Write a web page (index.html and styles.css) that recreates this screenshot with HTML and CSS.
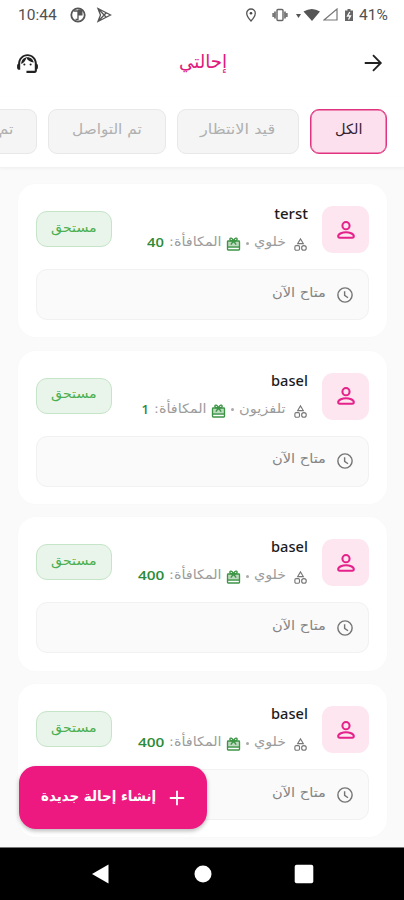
FILE: index.html
```
<!DOCTYPE html>
<html lang="ar" dir="rtl">
<head>
<meta charset="utf-8">
<title>إحالتي</title>
<link rel="stylesheet" href="styles.css">
</head>
<body>
<svg class="defs" width="0" height="0">
  <symbol id="person" viewBox="0 0 24 24"><g fill="none" stroke="currentColor" stroke-width="1.9"><circle cx="12" cy="8" r="3.3"/><path d="M12 14c-3 0-7.2 1.3-7.2 3.6 0 1 .5 1.5 1.4 1.5h11.6c.9 0 1.4-.5 1.4-1.5 0-2.300-4.200-3.600-7.200-3.600z"/></g></symbol>
  <symbol id="category" viewBox="0 0 24 24"><g fill="none" stroke="currentColor" stroke-width="1.800"><path d="M12 3l-4.500 7.500h9z"/><circle cx="17.500" cy="17.500" r="3.700"/><rect x="3" y="13.800" width="7.400" height="7.400" rx="2"/></g></symbol>
  <symbol id="gift" viewBox="0 0 24 24"><path d="M3 7.500h18v8H3z" fill="currentColor" opacity=".35"/><g fill="none" stroke="currentColor" stroke-width="2"><rect x="3" y="7.500" width="18" height="13.500" rx="1"/><path d="M3 16.500h18M12 7.500C10 2.500 6.500 2 6.500 5c0 2 3 2.500 5.500 2.500s5.500-.5 5.500-2.500c0-3-3.500-2.500-5.500 2.500zM12 7.500L8 13M12 7.500l4 5.500"/></g></symbol>
  <symbol id="clock" viewBox="0 0 24 24"><g fill="none" stroke="currentColor" stroke-width="1.900"><circle cx="12" cy="12" r="9.500"/><path d="M11.500 7v5.500l4.500 3.200"/></g></symbol>
</svg>
<div class="screen">
  <div class="status" dir="ltr">
    <span class="fit time" style="--w:39px"><b>10:44</b></span>
    <svg class="s-app" viewBox="0 0 16 16"><circle cx="8" cy="8" r="6.700" fill="#fff" stroke="#555" stroke-width="1.800"/><path d="M8 2.500h4.500v6H8z" fill="#555"/><path d="M4 4h4v8.500H5.500M8 8.500V13" fill="none" stroke="#555" stroke-width="1.300"/></svg>
    <svg class="s-play" viewBox="0 0 16 16"><path d="M2 1.500L14.500 8 2 14.500l2.500-6.500zM2 1.500l8 8.500M2 14.500l8-8.500" fill="none" stroke="#555" stroke-width="1.300"/></svg>
    <i class="grow"></i>
    <svg class="s-pin" viewBox="0 0 12 14"><path d="M6 1a4.300 4.300 0 0 0-4.300 4.300C1.700 8.500 6 13 6 13s4.300-4.500 4.300-7.700A4.300 4.300 0 0 0 6 1z" fill="none" stroke="#555" stroke-width="1.300"/><circle cx="6" cy="5.300" r="1.300" fill="#444"/></svg>
    <svg class="s-vib" viewBox="0 0 16 14"><rect x="5" y="1.500" width="6" height="11" rx="1" fill="none" stroke="#666" stroke-width="1.400"/><path d="M3 3.500v7M1.200 5v4M13 3.500v7M14.800 5v4" stroke="#777" stroke-width="1.800"/></svg>
    <svg class="s-wifi" viewBox="0 0 24 14"><path d="M0 6h5L2.500 10zM7.500 3.500Q16 -1.500 24 3.500L16 13z" fill="#555"/></svg>
    <svg class="s-sig" viewBox="0 0 15 13"><path d="M1 12L14 1v11z" fill="none" stroke="#777" stroke-width="1.200"/></svg>
    <svg class="s-bat" viewBox="0 0 10 14"><path d="M1 2.500h2.500V1h3v1.500H9V13H1z" fill="#666"/><path d="M5.800 4L3.500 8h3L4.500 11.500" fill="none" stroke="#fff" stroke-width="1.300"/></svg>
    <span class="fit pct" style="--w:29px"><b>41%</b></span>
  </div>
  <header class="appbar" dir="ltr">
    <svg class="agent" viewBox="0 0 24 24"><path d="M21 12.220C21 6.730 16.740 3 12 3c-4.690 0-9 3.650-9 9.280-.6.34-1 .98-1 1.720v2c0 1.100.9 2 2 2h1v-6.100c0-3.870 3.130-7 7-7s7 3.130 7 7V19h-8v2h8c1.100 0 2-.9 2-2v-1.220c.59-.31 1-.92 1-1.640v-2.300c0-.7-.41-1.310-1-1.620z"/><circle cx="9" cy="13" r="1"/><circle cx="15" cy="13" r="1"/><path d="M18 11.030C17.520 8.180 15.040 6 12.050 6c-3.030 0-6.290 2.510-6.030 6.450 2.470-1.010 4.330-3.210 4.860-5.890 1.310 2.630 4 4.440 7.120 4.470z"/></svg>
    <h1><span class="fit" style="--w:48px"><b>إحالتي</b></span></h1>
    <svg class="arrow" viewBox="0 0 24 24"><path d="M3 12h17M12 3.500l8.500 8.500-8.500 8.500" fill="none" stroke="#222" stroke-width="2"/></svg>
  </header>
  <nav class="chips">
    <div class="chip on"><span class="fit" style="--w:28px"><b>الكل</b></span></div>
    <div class="chip c2"><span class="fit" style="--w:75px"><b>قيد الانتظار</b></span></div>
    <div class="chip c3"><span class="fit" style="--w:70px"><b>تم التواصل</b></span></div>
    <div class="chip c4"><span class="fit" style="--w:70px"><b>تم التركيب</b></span></div>
  </nav>
  <main class="list" id="list"></main>
  <button class="fab"><svg viewBox="0 0 16 16"><path d="M8 .8v14.400M.8 8h14.400" stroke="#fff" stroke-width="1.800"/></svg><span class="fit" style="--w:115px"><b>إنشاء إحالة جديدة</b></span></button>
  <footer class="nav" dir="ltr">
    <svg viewBox="0 0 20 20"><path d="M1 10L17.500 .5v19z" fill="#fff"/></svg>
    <svg viewBox="0 0 20 20"><circle cx="10" cy="10" r="8.500" fill="#fff"/></svg>
    <svg viewBox="0 0 20 20"><rect x=".7" y=".7" width="18.600" height="18.600" rx="2" fill="#fff"/></svg>
  </footer>
</div>
<script src="app.js"></script>
</body>
</html>
```
FILE: styles.css
```
* { box-sizing: border-box; }
body { margin: 0; background: #fafafa; font-family: "Open Sans", "DejaVu Sans", sans-serif; }
.defs { position: absolute; }
svg { display: block; flex: none; }
.screen { width: 404px; height: 900px; overflow: hidden; position: relative; display: flex; flex-direction: column; background: #fafafa; }
.fit { display: inline-block; width: var(--w); white-space: nowrap; flex: none; }
.fit b { display: inline-block; font-weight: inherit; transform-origin: 100% 50%; }
[dir=ltr] .fit b { transform-origin: 0 50%; }
.grow { flex: 1; }

.status { height: 29px; flex: none; background: #fff; display: flex; align-items: center; padding: 0 16px 0 18px; color: #505050; font-family: Roboto, sans-serif; font-size: 15.500px; }
.s-app { width: 16px; height: 16px; margin-left: 13px; }
.s-play { width: 16px; height: 16px; margin-left: 10px; }
.s-pin { width: 12px; height: 14px; margin-right: 15px; }
.s-vib { width: 16px; height: 14px; margin-right: 8px; }
.s-wifi { width: 24px; height: 14px; margin-right: 3px; }
.s-sig { width: 15px; height: 13px; margin-right: 6px; }
.s-bat { width: 10px; height: 14px; margin-right: 5px; }

.appbar { height: 68px; flex: none; background: #fff; display: flex; align-items: center; justify-content: space-between; padding: 0 20px 0 15px; }
.appbar h1 { margin: 0; font-size: 19px; line-height: 24px; font-weight: 400; color: #e0197c; font-family: "DejaVu Sans", sans-serif; padding: 0 0 5px 3px; }
.agent { width: 25px; height: 25px; fill: #222; }
.arrow { width: 22px; height: 22px; }

.chips { height: 71px; flex: none; background: #fff; display: flex; gap: 11px; padding: 12px 17px 0 0; border-bottom: 1px solid #f2f2f2; box-shadow: 0 1px 3px rgba(0,0,0,.04); }
.chip { height: 45px; flex: none; border: 1px solid #e8e8e8; border-radius: 9px; background: #f5f5f5; color: #b0b0b0; display: flex; align-items: center; justify-content: center; font: 14px/20px "DejaVu Sans", sans-serif; padding-bottom: 5px; }
.on { width: 77px; background: #fce0ee; border: 1px solid #e0337f; box-shadow: inset 0 0 0 .500px #e0337f; color: #352532; }
.c2 { width: 122px; }
.c3 { width: 118px; }
.c4 { width: 118px; }

.list { flex: 1; min-height: 0; overflow: hidden; padding: 16px 17px 0 18px; display: flex; flex-direction: column; gap: 13.300px; }
.card { height: 153.400px; flex: none; background: #fff; border-radius: 18px; padding: 22px 18px 17px; box-shadow: 0 0 2px rgba(0,0,0,.025); }
.top { display: flex; height: 47px; }
.avatar { width: 47px; height: 47px; border-radius: 11px; background: #fde6f0; color: #e5218a; display: flex; align-items: center; justify-content: center; }
.avatar svg { width: 26px; height: 26px; }
.info { flex: 1; padding-right: 14px; }
.name { height: 16px; font: 500 15px/14px "Noto Sans", sans-serif; color: #1c1c1c; }
.meta { margin-top: 10px; height: 20px; display: flex; align-items: center; font: 13px/20px "DejaVu Sans", sans-serif; color: #9c9c9c; }
.cat { width: 15px; height: 15px; color: #777; margin: 5px 0 0 7px; }
.dot { width: 3px; height: 3px; border-radius: 50%; background: #aaa; margin: 2px 5px 0 4px; }
.gift { width: 17px; height: 16px; color: #3c9445; margin: 4px 0 0 3px; }
.num { margin-right: 5px; font: 600 13px/20px "Open Sans", sans-serif; color: #2e8b38; }
.badge { width: 76px; height: 36px; margin-top: 5px; border: 1px solid #c5e4c8; border-radius: 11px; background: #e9f5ea; color: #4caf50; display: flex; align-items: center; justify-content: center; padding-bottom: 3px; font: 13px/20px "DejaVu Sans", sans-serif; }
.slot { margin-top: 16px; height: 51px; border: 1px solid #f1f1f1; border-radius: 11px; background: #fafafa; display: flex; align-items: center; padding-right: 14px; font: 13px/20px "DejaVu Sans", sans-serif; color: #858585; }
.slot svg { width: 18px; height: 18px; color: #757575; margin-left: 10px; }
.slot .fit { margin-bottom: 4px; }

.fab { position: absolute; left: 19px; top: 766px; width: 188px; height: 63px; border: 0; border-radius: 17px; background: #ed1980; color: #fff; display: flex; align-items: center; padding: 0 22px 0 0; box-shadow: 0 2px 4px rgba(0,0,0,.28); font: bold 14px/20px "DejaVu Sans", sans-serif; }
.fab svg { width: 16px; height: 16px; margin-left: 13px; }
.fab .fit { margin-bottom: 3px; }

.nav { height: 53px; flex: none; background: #000; border-top: 1px solid #777; display: flex; justify-content: space-between; align-items: center; padding: 0 90px 0 91px; }
.nav svg { width: 20px; height: 20px; }
```
FILE: app.js
```
const referrals = [
  { name: 'terst', nameW: 34, type: 'خلوي', typeW: 32, reward: '40', rewardW: 17 },
  { name: 'basel', nameW: 37, type: 'تلفزيون', typeW: 47, reward: '1', rewardW: 7 },
  { name: 'basel', nameW: 37, type: 'خلوي', typeW: 32, reward: '400', rewardW: 26 },
  { name: 'basel', nameW: 37, type: 'خلوي', typeW: 32, reward: '400', rewardW: 26 }
];
const fit = (text, w, cls = '') => `<span class="fit ${cls}" style="--w:${w}px"><b>${text}</b></span>`;
document.getElementById('list').innerHTML = referrals.map(r => `
  <article class="card">
    <div class="top">
      <div class="avatar"><svg><use href="#person"/></svg></div>
      <div class="info">
        <div class="name">${fit(r.name, r.nameW)}</div>
        <div class="meta"><svg class="cat"><use href="#category"/></svg>${fit(r.type, r.typeW)}<i class="dot"></i><svg class="gift"><use href="#gift"/></svg>${fit('المكافأة:', 53)}${fit(r.reward, r.rewardW, 'num')}</div>
      </div>
      <div class="badge">${fit('مستحق', 46)}</div>
    </div>
    <div class="slot"><svg><use href="#clock"/></svg>${fit('متاح الآن', 54)}</div>
  </article>`).join('');
document.querySelectorAll('.fit').forEach(el => {
  const inner = el.firstElementChild;
  inner.style.transform = `scaleX(${el.clientWidth / inner.offsetWidth})`;
});
```
